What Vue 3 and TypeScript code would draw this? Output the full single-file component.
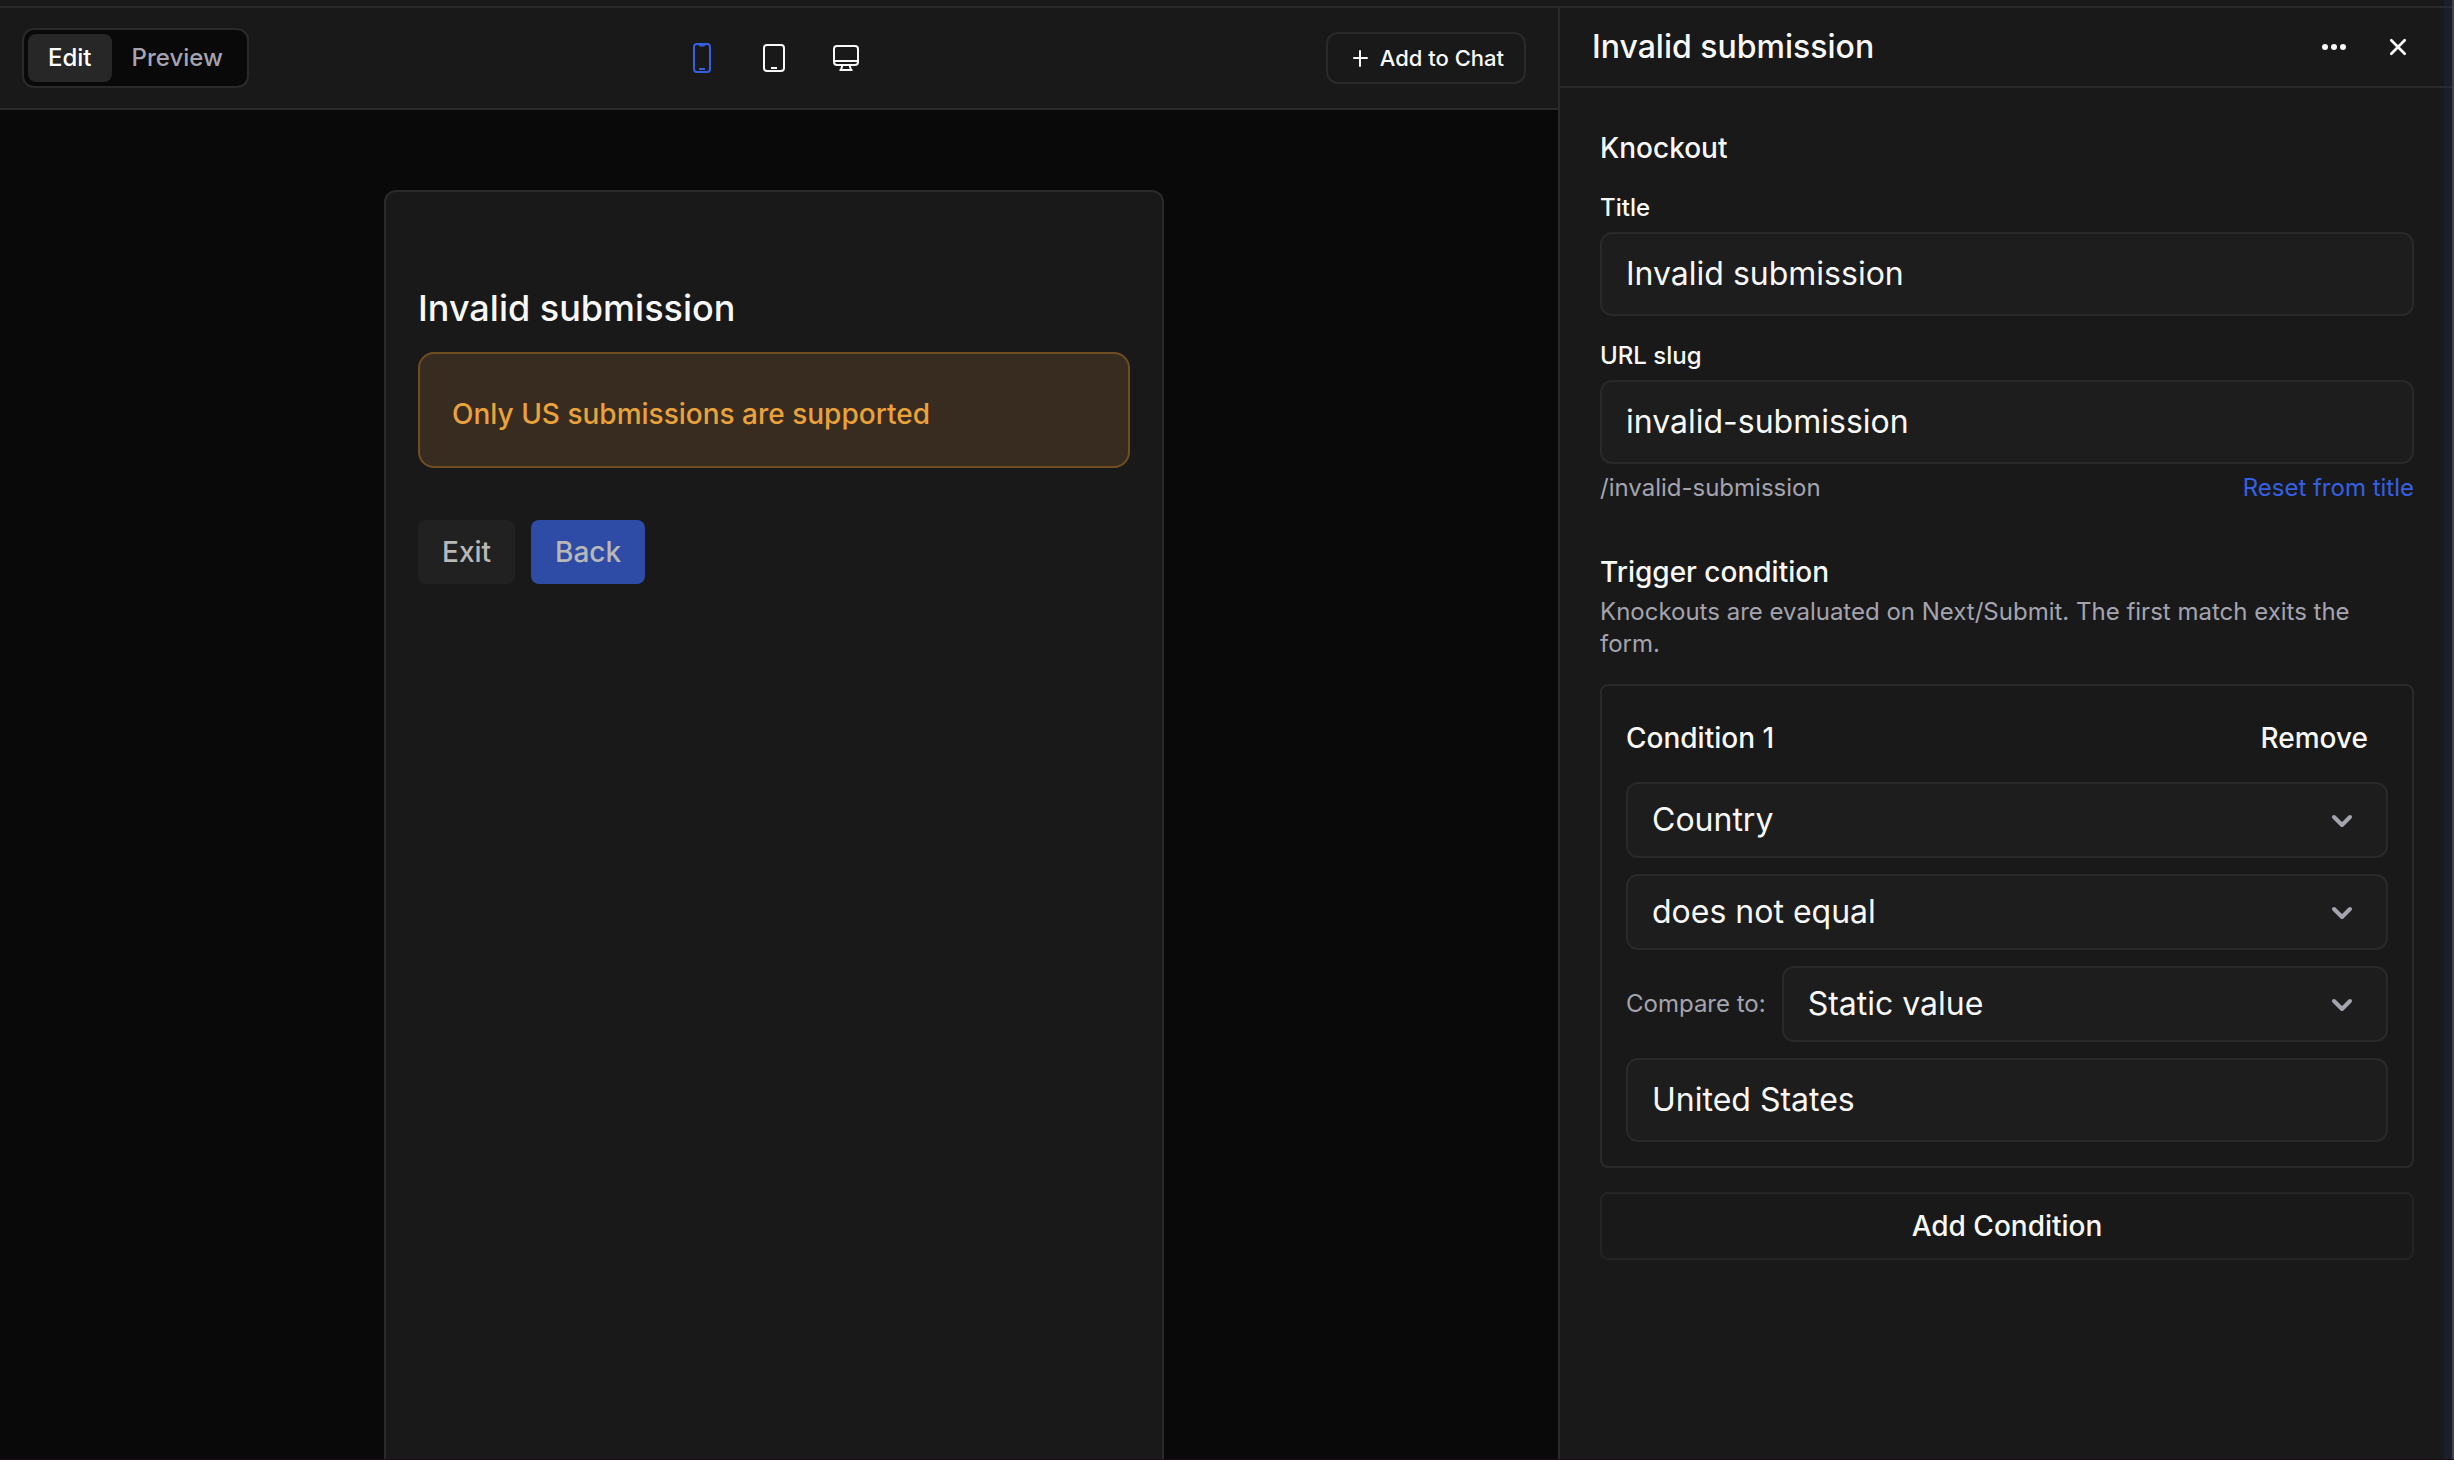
<script setup lang="ts">
import { ref } from 'vue'

type Device = 'phone' | 'tablet' | 'desktop'

const mode = ref<'edit' | 'preview'>('edit')
const device = ref<Device>('phone')
const title = ref('Invalid submission')
const slug = ref('invalid-submission')
const field = ref('Country')
const operator = ref('does not equal')
const source = ref('Static value')
const value = ref('United States')

function resetSlug() {
  slug.value = title.value.trim().toLowerCase().replace(/\s+/g, '-')
}
</script>

<template>
  <div class="app">
    <div class="top-strip"></div>
    <div class="workspace">
      <main class="editor">
        <header class="toolbar">
          <div class="segment">
            <button type="button" :class="{ active: mode === 'edit' }" @click="mode = 'edit'">Edit</button>
            <button type="button" :class="{ active: mode === 'preview' }" @click="mode = 'preview'">Preview</button>
          </div>
          <div class="devices">
            <button type="button" aria-label="Phone" :class="{ active: device === 'phone' }" @click="device = 'phone'">
              <svg width="32" height="32" viewBox="0 0 32 32" fill="none" stroke="currentColor" stroke-width="2">
                <rect x="8" y="2" width="16" height="28" rx="3" />
                <path d="M13 2h6v1a1 1 0 0 1-1 1h-4a1 1 0 0 1-1-1z" fill="currentColor" stroke-width="1" />
                <path d="M13 27h6" />
              </svg>
            </button>
            <button type="button" aria-label="Tablet" :class="{ active: device === 'tablet' }" @click="device = 'tablet'">
              <svg width="32" height="32" viewBox="0 0 32 32" fill="none" stroke="currentColor" stroke-width="2">
                <rect x="6" y="3" width="20" height="26" rx="3" />
                <path d="M13 26h6" />
              </svg>
            </button>
            <button type="button" aria-label="Desktop" :class="{ active: device === 'desktop' }" @click="device = 'desktop'">
              <svg width="32" height="32" viewBox="0 0 32 32" fill="none" stroke="currentColor" stroke-width="2">
                <rect x="4" y="4" width="24" height="19" rx="3" />
                <path d="M4 19h24M12.500 23l-1.500 5M19.500 23l1.500 5M9.500 28h13" />
              </svg>
            </button>
          </div>
          <button type="button" class="chat">
            <svg width="20" height="20" viewBox="0 0 20 20" fill="none" stroke="currentColor" stroke-width="2">
              <path d="M10 3v15M4 10h13" stroke-linecap="round" />
            </svg>
            Add to Chat
          </button>
        </header>
        <div class="canvas">
          <section class="frame">
            <h1>Invalid submission</h1>
            <p class="alert">Only US submissions are supported</p>
            <div class="actions">
              <button type="button" class="exit">Exit</button>
              <button type="button" class="back">Back</button>
            </div>
          </section>
        </div>
      </main>

      <aside class="panel">
        <header class="panel-head">
          <h2>{{ title }}</h2>
          <div class="panel-tools">
            <button type="button" aria-label="More">
              <svg width="32" height="32" viewBox="0 0 32 32" fill="currentColor">
                <circle cx="7" cy="16" r="3" /><circle cx="16" cy="16" r="3" /><circle cx="25" cy="16" r="3" />
              </svg>
            </button>
            <button type="button" aria-label="Close">
              <svg width="32" height="32" viewBox="0 0 32 32" fill="none" stroke="currentColor" stroke-width="2.700" stroke-linecap="round">
                <path d="M9.300 9.300l13.400 13.400M22.700 9.300L9.300 22.700" />
              </svg>
            </button>
          </div>
        </header>
        <form class="panel-body" @submit.prevent>
          <h3>Knockout</h3>
          <label class="label" for="title">Title</label>
          <input id="title" v-model="title" type="text" class="control" />
          <label class="label" for="slug">URL slug</label>
          <input id="slug" v-model="slug" type="text" class="control" />
          <div class="hint">
            <span>/{{ slug }}</span>
            <button type="button" class="reset" @click="resetSlug">Reset from title</button>
          </div>
          <h3 class="trigger">Trigger condition</h3>
          <p class="note">Knockouts are evaluated on Next/Submit. The first match exits the form.</p>
          <fieldset class="card" aria-label="Condition 1">
            <div class="card-head">
              <h3>Condition 1</h3>
              <button type="button" class="remove">Remove</button>
            </div>
            <div class="select">
              <select v-model="field" class="control" aria-label="Field"><option>Country</option></select>
              <svg width="24" height="24" viewBox="0 0 24 24"><path d="M4 9l8 8 8-8" /></svg>
            </div>
            <div class="select">
              <select v-model="operator" class="control" aria-label="Operator"><option>does not equal</option><option>equals</option></select>
              <svg width="24" height="24" viewBox="0 0 24 24"><path d="M4 9l8 8 8-8" /></svg>
            </div>
            <div class="compare">
              <label for="source">Compare to:</label>
              <div class="select">
                <select id="source" v-model="source" class="control"><option>Static value</option></select>
                <svg width="24" height="24" viewBox="0 0 24 24"><path d="M4 9l8 8 8-8" /></svg>
              </div>
            </div>
            <input v-model="value" type="text" class="control" aria-label="Value" />
          </fieldset>
          <button type="button" class="add">Add Condition</button>
        </form>
      </aside>
    </div>
    <div class="edge"></div>
  </div>
</template>

<style>
body {
  background: #090909;
}
</style>

<style scoped>
.app,
.app * {
  box-sizing: border-box;
}
.app {
  position: relative;
  display: flex;
  flex-direction: column;
  height: 100vh;
  overflow: hidden;
  color: #f8f8f8;
  background: #191919;
  border-bottom: 1px solid #1a0d14;
  font: 500 24px/32px Inter, "Liberation Sans", sans-serif;
}
button,
input,
select {
  font: inherit;
  color: inherit;
  background: none;
  border: 0;
  margin: 0;
  padding: 0;
}
button {
  cursor: pointer;
}
svg {
  display: block;
  flex: none;
}
h1,
h2,
h3,
p {
  margin: 0;
  font-weight: 500;
}
.top-strip {
  flex: none;
  height: 8px;
  border-bottom: 2px solid #2a2a2a;
}
.workspace {
  flex: 1;
  min-height: 0;
  display: flex;
}
.editor {
  flex: 1;
  min-width: 0;
  display: flex;
  flex-direction: column;
}
.toolbar {
  flex: none;
  display: grid;
  grid-template-columns: 1fr auto 1fr;
  align-items: center;
  padding: 20px 32px 20px 22px;
  border-bottom: 2px solid #2a2a2a;
}
.segment {
  justify-self: start;
  display: flex;
  padding: 4px;
  background: #090909;
  border: 2px solid #2a2a2a;
  border-radius: 12px;
}
.segment button {
  padding: 8px 20px;
  border-radius: 8px;
  color: #a4a4b0;
}
.segment .active {
  background: #272727;
  color: #fff;
}
.devices {
  display: flex;
  gap: 40px;
}
.devices .active {
  color: #3660e2;
}
.chat {
  justify-self: end;
  display: flex;
  align-items: center;
  gap: 10px;
  height: 52px;
  padding: 0 20px 0 22px;
  border: 2px solid #2a2a2a;
  border-radius: 12px;
  font-size: 22px;
}
.canvas {
  flex: 1;
  min-height: 0;
  display: flex;
  justify-content: center;
  padding: 80px 10px 0 0;
  background: #090909;
}
.frame {
  width: 100%;
  max-width: 780px;
  padding: 92px 32px 0;
  background: #191919;
  border: 2px solid #2a2a2a;
  border-bottom: 0;
  border-radius: 12px 12px 0 0;
}
.frame h1 {
  font-size: 36px;
  line-height: 48px;
  margin-bottom: 20px;
}
.alert {
  padding: 42px 32px 34px;
  color: #eaa23b;
  background: #382b1f;
  border: 2px solid #6f4e22;
  border-radius: 16px;
  font-size: 28px;
  line-height: 36px;
}
.actions {
  display: flex;
  gap: 16px;
  margin-top: 52px;
}
.actions button {
  height: 64px;
  padding: 0 24px;
  border-radius: 8px;
  font-size: 28px;
  color: #b8b8b8;
}
.actions .exit {
  background: #212121;
}
.actions .back {
  background: #2e4ba6;
}
.panel {
  width: 896px;
  flex: none;
  border-left: 2px solid #2a2a2a;
}
.panel-head {
  display: flex;
  align-items: center;
  justify-content: space-between;
  height: 80px;
  padding: 0 40px 0 32px;
  border-bottom: 2px solid #2a2a2a;
}
.panel-head h2 {
  font-size: 32px;
  line-height: 40px;
}
.panel-tools {
  display: flex;
  gap: 32px;
}
.panel-body {
  display: flex;
  flex-direction: column;
  padding: 40px;
}
h3 {
  font-size: 28px;
  line-height: 40px;
}
.label {
  margin-top: 24px;
  margin-bottom: 8px;
}
.control {
  width: 100%;
  height: 84px;
  padding: 0 24px 2px;
  background: #1d1d1d;
  border: 2px solid #292929;
  border-radius: 12px;
  font-size: 32px;
  font-weight: 400;
  line-height: 48px;
}
.hint {
  display: flex;
  justify-content: space-between;
  margin-top: 8px;
  color: #a4a4b0;
  font-weight: 400;
}
.reset {
  color: #3660e2;
}
.trigger {
  margin-top: 48px;
}
.note {
  margin-top: 4px;
  color: #a4a4b0;
  font-weight: 400;
}
.card {
  display: flex;
  flex-direction: column;
  gap: 16px;
  min-width: 0;
  margin: 24px 0;
  padding: 24px;
  border: 2px solid #2a2a2a;
  border-radius: 8px;
}
.card-head {
  display: flex;
  align-items: center;
  justify-content: space-between;
  height: 56px;
}
.remove {
  padding: 0 20px;
  font-size: 28px;
  line-height: 40px;
}
.select {
  position: relative;
  flex: 1 0 auto;
}
.select select {
  display: block;
  height: 76px;
  padding-bottom: 0;
  appearance: none;
}
.select svg {
  position: absolute;
  top: 26px;
  right: 34px;
  fill: none;
  stroke: #a4a4b0;
  stroke-width: 4;
  stroke-linecap: round;
  stroke-linejoin: round;
  pointer-events: none;
}
.compare {
  display: flex;
  align-items: center;
  gap: 16px;
  color: #a4a4b0;
  font-weight: 400;
}
.compare select {
  color: #f8f8f8;
}
.add {
  height: 68px;
  border: 2px solid #242424;
  border-radius: 8px;
  font-size: 28px;
}
.edge {
  position: absolute;
  inset: 0 0 0 auto;
  width: 10px;
  background: rgba(28, 50, 92, 0.24);
  border-right: 2px solid #3f414d;
  pointer-events: none;
}
</style>
